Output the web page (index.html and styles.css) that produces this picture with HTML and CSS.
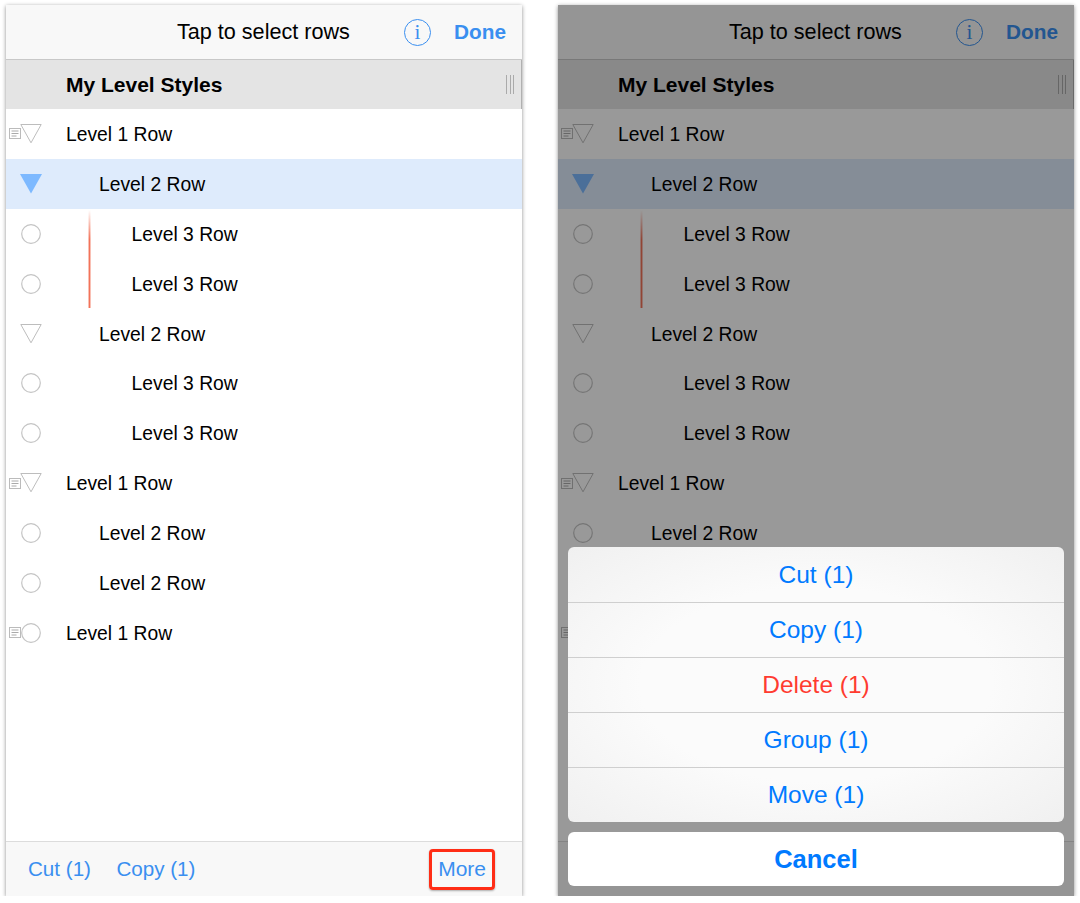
FILE: index.html
```html
<!DOCTYPE html>
<html lang="en">
<head>
    <meta charset="UTF-8">
    <title>Tap to select rows</title>
    <meta name="viewport" content="width=device-width, initial-scale=1.0">
    <link rel="stylesheet" href="styles.css">
</head>
<body>

    <svg class="icon-defs" width="0" height="0">
        <symbol id="note" viewBox="0 0 12 11">
            <rect x="0.5" y="0.5" width="11" height="10" fill="none" stroke="#bbb"/>
            <path d="M2.5 3h7M2.5 5.5h7M2.5 8h5" fill="none" stroke="#aaa"/>
        </symbol>
        <symbol id="tri" viewBox="0 0 22 20">
            <path d="M0.8 0.5H21.2L11 18.8Z" fill="none" stroke="#bdbdbd"/>
        </symbol>
        <symbol id="tri-on" viewBox="0 0 22 20">
            <path d="M0 0H22L11 19.5Z" fill="#7db9ff"/>
        </symbol>
        <symbol id="dot" viewBox="0 0 20 20">
            <circle cx="10" cy="10" r="9.3" fill="none" stroke="#c4c4c4" stroke-width="1.2"/>
        </symbol>
    </svg>

    <!-- left: plain selection mode -->
    <div class="phone">
        <div class="nav">
            <span class="nav-title">Tap to select rows</span>
            <span class="info">i</span>
            <span class="done">Done</span>
        </div>
        <div class="style-head">
            <span>My Level Styles</span>
            <span class="handle"></span>
        </div>
        <div class="rows">
            <div class="focus-line"></div>
            <div class="row l1"><div class="gutter"><svg class="note"><use href="#note"/></svg><svg class="tri"><use href="#tri"/></svg></div>Level 1 Row</div>
            <div class="row l2 selected"><div class="gutter"><span class="note"></span><svg class="tri"><use href="#tri-on"/></svg></div>Level 2 Row</div>
            <div class="row l3"><div class="gutter"><span class="note"></span><svg class="dot"><use href="#dot"/></svg></div>Level 3 Row</div>
            <div class="row l3"><div class="gutter"><span class="note"></span><svg class="dot"><use href="#dot"/></svg></div>Level 3 Row</div>
            <div class="row l2"><div class="gutter"><span class="note"></span><svg class="tri"><use href="#tri"/></svg></div>Level 2 Row</div>
            <div class="row l3"><div class="gutter"><span class="note"></span><svg class="dot"><use href="#dot"/></svg></div>Level 3 Row</div>
            <div class="row l3"><div class="gutter"><span class="note"></span><svg class="dot"><use href="#dot"/></svg></div>Level 3 Row</div>
            <div class="row l1"><div class="gutter"><svg class="note"><use href="#note"/></svg><svg class="tri"><use href="#tri"/></svg></div>Level 1 Row</div>
            <div class="row l2"><div class="gutter"><span class="note"></span><svg class="dot"><use href="#dot"/></svg></div>Level 2 Row</div>
            <div class="row l2"><div class="gutter"><span class="note"></span><svg class="dot"><use href="#dot"/></svg></div>Level 2 Row</div>
            <div class="row l1"><div class="gutter"><svg class="note"><use href="#note"/></svg><svg class="dot"><use href="#dot"/></svg></div>Level 1 Row</div>
        </div>
        <div class="toolbar">
            <span>Cut (1)</span>
            <span>Copy (1)</span>
            <span class="more">More</span>
        </div>
    </div>

    <!-- right: same list with the action sheet open -->
    <div class="phone">
        <div class="nav">
            <span class="nav-title">Tap to select rows</span>
            <span class="info">i</span>
            <span class="done">Done</span>
        </div>
        <div class="style-head">
            <span>My Level Styles</span>
            <span class="handle"></span>
        </div>
        <div class="rows">
            <div class="focus-line"></div>
            <div class="row l1"><div class="gutter"><svg class="note"><use href="#note"/></svg><svg class="tri"><use href="#tri"/></svg></div>Level 1 Row</div>
            <div class="row l2 selected"><div class="gutter"><span class="note"></span><svg class="tri"><use href="#tri-on"/></svg></div>Level 2 Row</div>
            <div class="row l3"><div class="gutter"><span class="note"></span><svg class="dot"><use href="#dot"/></svg></div>Level 3 Row</div>
            <div class="row l3"><div class="gutter"><span class="note"></span><svg class="dot"><use href="#dot"/></svg></div>Level 3 Row</div>
            <div class="row l2"><div class="gutter"><span class="note"></span><svg class="tri"><use href="#tri"/></svg></div>Level 2 Row</div>
            <div class="row l3"><div class="gutter"><span class="note"></span><svg class="dot"><use href="#dot"/></svg></div>Level 3 Row</div>
            <div class="row l3"><div class="gutter"><span class="note"></span><svg class="dot"><use href="#dot"/></svg></div>Level 3 Row</div>
            <div class="row l1"><div class="gutter"><svg class="note"><use href="#note"/></svg><svg class="tri"><use href="#tri"/></svg></div>Level 1 Row</div>
            <div class="row l2"><div class="gutter"><span class="note"></span><svg class="dot"><use href="#dot"/></svg></div>Level 2 Row</div>
            <div class="row l2"><div class="gutter"><span class="note"></span><svg class="dot"><use href="#dot"/></svg></div>Level 2 Row</div>
            <div class="row l1"><div class="gutter"><svg class="note"><use href="#note"/></svg><svg class="dot"><use href="#dot"/></svg></div>Level 1 Row</div>
        </div>
        <div class="toolbar">
            <span>Cut (1)</span>
            <span>Copy (1)</span>
            <span class="more plain">More</span>
        </div>

        <div class="dim"></div>
        <div class="sheet">
            <div class="sheet-group">
                <div class="sheet-item">Cut (1)</div>
                <div class="sheet-item">Copy (1)</div>
                <div class="sheet-item danger">Delete (1)</div>
                <div class="sheet-item">Group (1)</div>
                <div class="sheet-item">Move (1)</div>
            </div>
            <div class="sheet-cancel">Cancel</div>
        </div>
    </div>

</body>
</html>
```

FILE: styles.css
```css
body {
    margin: 0;
    padding: 5px 0 0 6px;
    background: white;
    display: flex;
    gap: 36px;
    font-family: "Liberation Sans", Arial, sans-serif;
    color: black;
}

.icon-defs {
    position: absolute;
}

.phone {
    position: relative;
    width: 516px;
    height: 891px;
    background: white;
    display: flex;
    flex-direction: column;
    flex-shrink: 0;
    box-shadow: 0 1px 4px rgba(0, 0, 0, 0.45);
}

.nav {
    height: 55px;
    box-sizing: border-box;
    background: #f8f8f8;
    border-bottom: 1px solid #c8c8c8;
    display: flex;
    align-items: center;
    padding: 0 16px 0 171px;
}

.nav-title {
    font-size: 21.6px;
    width: 227px;
    flex-shrink: 0;
}

.info {
    width: 27px;
    height: 27px;
    box-sizing: border-box;
    border: 1.5px solid #3a8ff0;
    border-radius: 50%;
    color: #3a8ff0;
    font-family: "Liberation Serif", serif;
    font-size: 21px;
    line-height: 24px;
    text-align: center;
    flex-shrink: 0;
}

.done {
    margin-left: auto;
    color: #3a8ff0;
    font-size: 20.8px;
    font-weight: bold;
}

.style-head {
    height: 49px;
    box-sizing: border-box;
    background: #e4e4e4;
    border-right: 1px solid #b0b0b0;
    display: flex;
    align-items: center;
    justify-content: space-between;
    padding: 1px 7px 0 60px;
    font-size: 21px;
    font-weight: bold;
}

.handle {
    width: 8px;
    height: 19px;
    margin-top: -2px;
    border-left: 1px solid #aaa;
    border-right: 1px solid #aaa;
    box-sizing: border-box;
    background: linear-gradient(#aaa, #aaa) center / 1px 100% no-repeat;
}

.rows {
    position: relative;
    flex: 1;
    background: white;
}

.row {
    height: 49.9px;
    box-sizing: border-box;
    padding-top: 2px;
    display: flex;
    align-items: center;
    font-size: 19.3px;
}

.row.selected {
    background: #deebfc;
}

.gutter {
    display: flex;
    align-items: center;
    padding-left: 3px;
    width: 57px;
    flex-shrink: 0;
}

.l2 .gutter {
    width: 90px;
}

.l3 .gutter {
    width: 122.6px;
}

.note {
    width: 12px;
    height: 11px;
    flex-shrink: 0;
    margin-top: -2px;
}

.tri {
    width: 22px;
    height: 20px;
    margin-left: -1px;
    margin-top: -2px;
}

.dot {
    width: 20px;
    height: 20px;
    margin-top: -2px;
}

.focus-line {
    position: absolute;
    left: 82px;
    top: 101px;
    width: 3px;
    height: 98px;
    background: linear-gradient(90deg, rgba(240, 90, 60, 0.15), rgba(240, 90, 60, 0.85) 50%, rgba(240, 90, 60, 0.15));
    -webkit-mask-image: linear-gradient(transparent, black 30%);
    mask-image: linear-gradient(transparent, black 30%);
}

.toolbar {
    height: 55px;
    box-sizing: border-box;
    background: #f8f8f8;
    border-top: 1px solid #dcdcdc;
    display: flex;
    align-items: center;
    gap: 25.5px;
    padding: 0 27px 0 22px;
    color: #3a8ff0;
    font-size: 20.6px;
}

.more {
    margin-left: auto;
    font-size: 21px;
    padding: 5px 6px 6px;
    border: 3px solid #ff2d16;
    border-radius: 4px;
    box-shadow: 0 1px 2px rgba(0, 0, 0, 0.3);
}

.more.plain {
    border-color: transparent;
    box-shadow: none;
}

.dim {
    position: absolute;
    inset: 0;
    background: rgba(0, 0, 0, 0.4);
}

.sheet {
    position: absolute;
    left: 10px;
    right: 10px;
    bottom: 10px;
    display: flex;
    flex-direction: column;
    gap: 10px;
}

.sheet-group {
    border-radius: 6px;
    overflow: hidden;
    background: radial-gradient(ellipse at center, #fbfbfb 50%, #f0f0f0 100%);
}

.sheet-item {
    height: 55px;
    box-sizing: border-box;
    display: flex;
    align-items: center;
    justify-content: center;
    border-top: 1px solid #cfcfcf;
    color: #007aff;
    font-size: 24.5px;
}

.sheet-item:first-child {
    border-top: none;
}

.sheet-item.danger {
    color: #ff3b30;
}

.sheet-cancel {
    height: 54px;
    border-radius: 6px;
    background: white;
    display: flex;
    align-items: center;
    justify-content: center;
    color: #007aff;
    font-size: 25.5px;
    font-weight: bold;
}
```
